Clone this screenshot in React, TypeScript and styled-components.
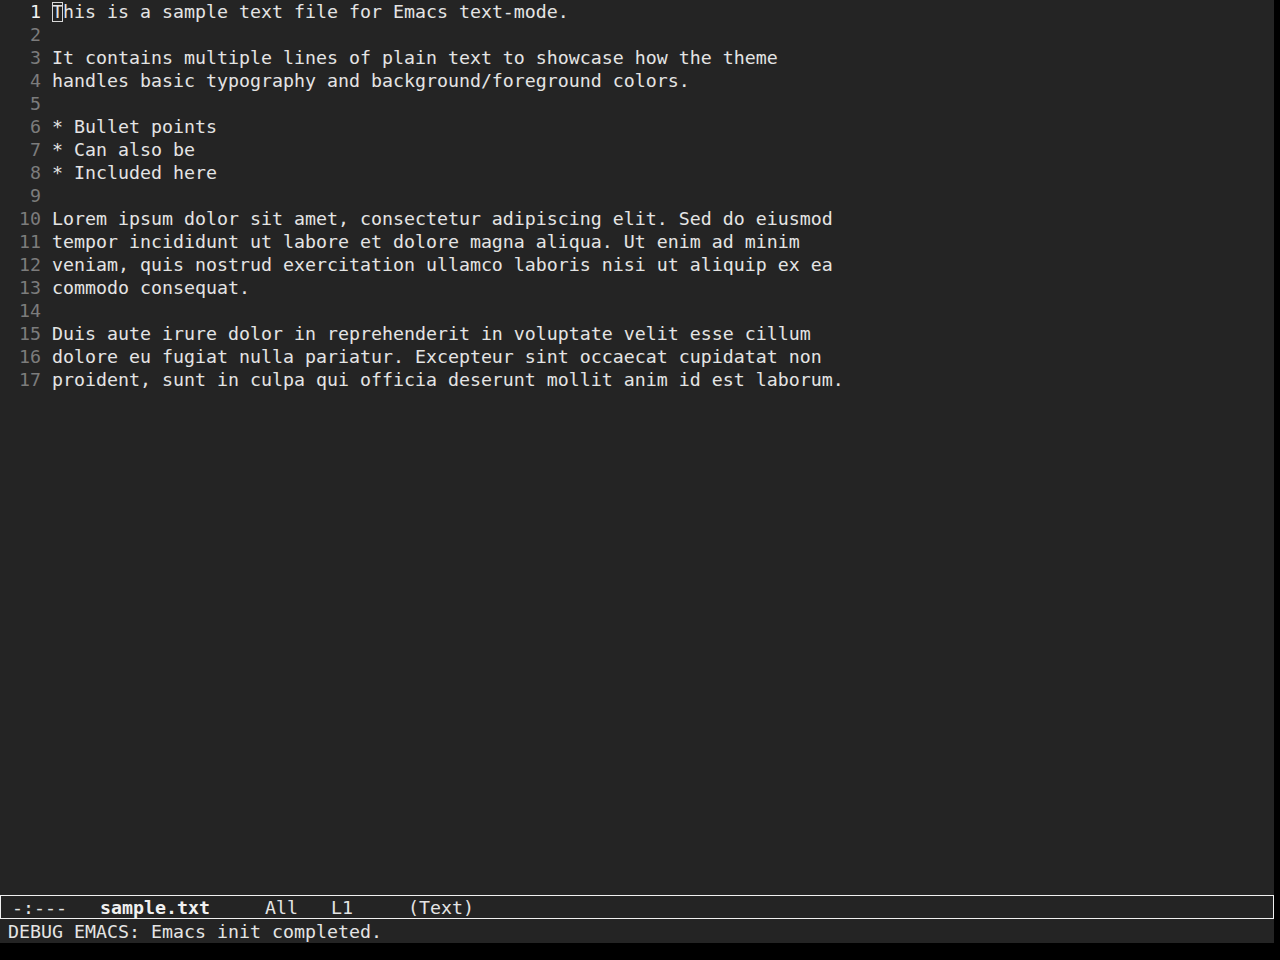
import styled, { createGlobalStyle } from 'styled-components'

// ── Global ────────────────────────────────────────────────
const GlobalStyle = createGlobalStyle`
  html, body {
    margin: 0;
    padding: 0;
    background: #000;
  }
  body {
    font-family: "DejaVu Sans Mono", "Liberation Mono", monospace;
  }
`

// ── Styled ────────────────────────────────────────────────
const Frame = styled.div`
  width: 1274px;
  height: 943px;
  background: #242424;
  color: #e4e4e4;
  font-family: "DejaVu Sans Mono", "Liberation Mono", monospace;
  font-size: 18.27px;
  display: flex;
  flex-direction: column;
  overflow: hidden;
`

const Buffer = styled.div`
  flex: 1;
  display: flex;
  flex-direction: column;
  padding-left: 8px;
`

const Row = styled.div`
  height: 23px;
  line-height: 23px;
  display: flex;
  white-space: pre;
`

const LineNo = styled.span<{ $current: boolean }>`
  width: 33px;
  padding-right: 11px;
  text-align: right;
  flex-shrink: 0;
  color: ${(p) => (p.$current ? '#f2f2f2' : '#7c7c7c')};
`

const LineText = styled.span`
  color: #e4e4e4;
`

const Cursor = styled.span`
  position: relative;
  &::before {
    content: '';
    position: absolute;
    left: 0;
    right: 0;
    top: 1px;
    bottom: 0px;
    border: 1px solid #d8d8d8;
  }
`

const ModeLine = styled.div`
  height: 24px;
  box-sizing: border-box;
  border: 1px solid #f0f0f0;
  padding-top: 2px;
  line-height: 20px;
  white-space: pre;
  color: #e4e4e4;
  display: flex;
`

const Bold = styled.span`
  font-weight: bold;
  color: #f0f0f0;
`

const EchoArea = styled.div`
  height: 24px;
  box-sizing: border-box;
  padding: 2px 0 0 8px;
  line-height: 22px;
  white-space: pre;
  color: #e4e4e4;
`

// ── Data ──────────────────────────────────────────────────
const lines = [
  'This is a sample text file for Emacs text-mode.',
  '',
  'It contains multiple lines of plain text to showcase how the theme',
  'handles basic typography and background/foreground colors.',
  '',
  '* Bullet points',
  '* Can also be',
  '* Included here',
  '',
  'Lorem ipsum dolor sit amet, consectetur adipiscing elit. Sed do eiusmod',
  'tempor incididunt ut labore et dolore magna aliqua. Ut enim ad minim',
  'veniam, quis nostrud exercitation ullamco laboris nisi ut aliquip ex ea',
  'commodo consequat.',
  '',
  'Duis aute irure dolor in reprehenderit in voluptate velit esse cillum',
  'dolore eu fugiat nulla pariatur. Excepteur sint occaecat cupidatat non',
  'proident, sunt in culpa qui officia deserunt mollit anim id est laborum.',
]

// ── Component ─────────────────────────────────────────────
export default function App() {
  return (
    <>
      <GlobalStyle />
      <Frame>
        <Buffer>
          {lines.map((text, i) => (
            <Row key={i}>
              <LineNo $current={i === 0}>{i + 1}</LineNo>
              {i === 0 ? (
                <LineText>
                  <Cursor>{text[0]}</Cursor>
                  {text.slice(1)}
                </LineText>
              ) : (
                <LineText>{text}</LineText>
              )}
            </Row>
          ))}
        </Buffer>
        <ModeLine>
          <span>{' -:---   '}</span>
          <Bold>sample.txt</Bold>
          <span>{'     All   L1     (Text)'}</span>
        </ModeLine>
        <EchoArea>DEBUG EMACS: Emacs init completed.</EchoArea>
      </Frame>
    </>
  )
}
